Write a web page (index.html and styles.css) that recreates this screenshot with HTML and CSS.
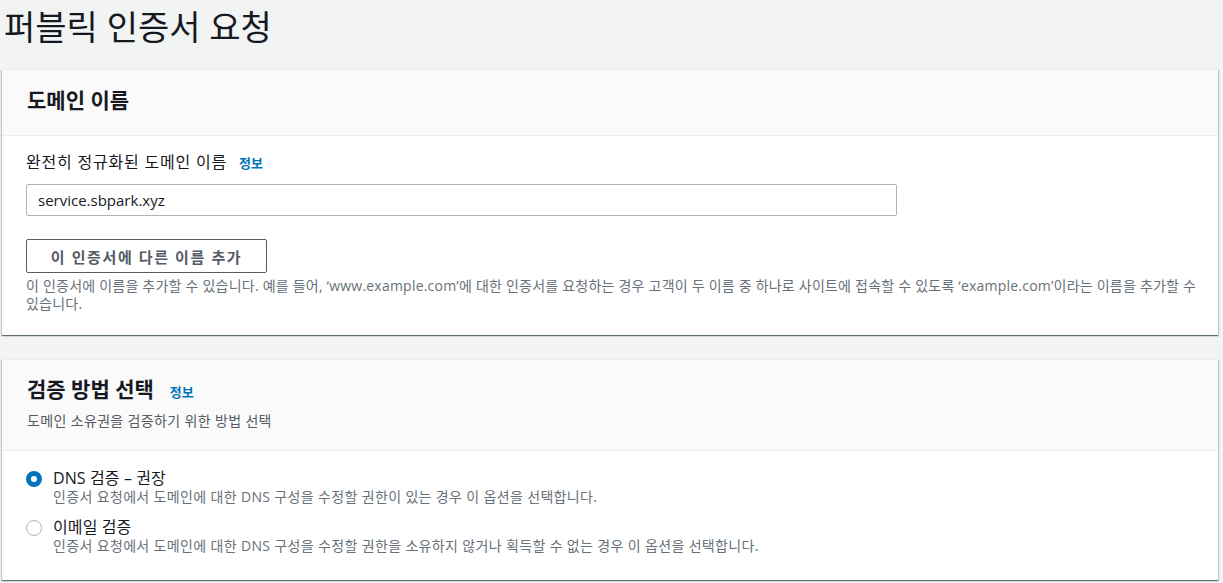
FILE: index.html
```html
<!DOCTYPE html>
<html lang="ko">
<head>
<meta charset="utf-8">
<title>퍼블릭 인증서 요청</title>
<link rel="stylesheet" href="styles.css">
</head>
<body>
<h1 class="page-title">퍼블릭 인증서 요청</h1>

<section class="card">
  <div class="card-header">
    <h2 class="card-title">도메인 이름</h2>
  </div>
  <div class="card-body">
    <div class="field-label">완전히 정규화된 도메인 이름 <a class="info">정보</a></div>
    <div class="input">service.sbpark.xyz</div>
    <button class="btn">이 인증서에 다른 이름 추가</button>
    <p class="hint">이 인증서에 이름을 추가할 수 있습니다. 예를 들어, ‘www.example.com’에 대한 인증서를 요청하는 경우 고객이 두 이름 중 하나로 사이트에 접속할 수 있도록 ‘example.com’이라는 이름을 추가할 수 있습니다.</p>
  </div>
</section>

<section class="card">
  <div class="card-header tall">
    <h2 class="card-title">검증 방법 선택 <a class="info">정보</a></h2>
    <p class="card-sub">도메인 소유권을 검증하기 위한 방법 선택</p>
  </div>
  <div class="card-body radios">
    <div class="radio-row">
      <span class="radio checked"></span>
      <div class="radio-text">
        <div class="radio-label">DNS 검증 – 권장</div>
        <div class="radio-desc">인증서 요청에서 도메인에 대한 DNS 구성을 수정할 권한이 있는 경우 이 옵션을 선택합니다.</div>
      </div>
    </div>
    <div class="radio-row">
      <span class="radio"></span>
      <div class="radio-text">
        <div class="radio-label">이메일 검증</div>
        <div class="radio-desc">인증서 요청에서 도메인에 대한 DNS 구성을 수정할 권한을 소유하지 않거나 획득할 수 없는 경우 이 옵션을 선택합니다.</div>
      </div>
    </div>
  </div>
</section>
</body>
</html>
```
FILE: styles.css
```css
* { box-sizing: border-box; }
html, body { margin: 0; padding: 0; }
body {
  background: #f2f3f3;
  font-family: "Open Sans", "Noto Sans CJK KR", sans-serif;
  color: #16191f;
  padding: 0 5px 0 2px;
}
.page-title {
  margin: 0;
  padding: 4px 0 0 2px;
  height: 69px;
  font-size: 34px;
  font-weight: 400;
  line-height: 46px;
  color: #16191f;
}
.card {
  background: #fff;
  border-top: 1px solid #eaeded;
  box-shadow: 0 1px 1px 0 rgba(0,28,36,.45), 1px 1px 1px 0 rgba(0,28,36,.15), -1px 1px 1px 0 rgba(0,28,36,.15);
  margin-bottom: 24px;
}
.card-header {
  background: #fafafa;
  border-bottom: 1px solid #eaeded;
  padding: 16px 25px 0;
  height: 66px;
}
.card-header.tall { height: 91px; padding-top: 15px; }
.card-title {
  margin: 0;
  font-size: 21px;
  font-weight: 700;
  line-height: 28px;
  display: flex;
  align-items: baseline;
  gap: 16px;
}
.card-sub {
  margin: 5px 0 0;
  font-size: 14px;
  letter-spacing: 0.35px;
  line-height: 20px;
  color: #545b64;
}
.info {
  color: #0073bb;
  font-weight: 700;
  font-size: 13px;
  letter-spacing: 0;
  text-decoration: none;
}
.card-body { padding: 15px 18px 22px 24px; }
.field-label {
  font-size: 16px;
  letter-spacing: 0.8px;
  line-height: 22px;
  margin-bottom: 10px;
}
.field-label .info { margin-left: 7px; }
.input {
  width: 871px;
  height: 32px;
  border: 1px solid #aab7b8;
  border-radius: 2px;
  padding: 0 11px;
  font-size: 15px;
  line-height: 30px;
  color: #16191f;
}
.btn {
  display: block;
  margin-top: 23px;
  width: 241px;
  height: 34px;
  background: #fff;
  border: 1px solid #545b64;
  border-radius: 2px;
  font-family: inherit;
  font-size: 15px;
  font-weight: 700;
  letter-spacing: 1.6px;
  color: #545b64;
  padding: 0;
}
.hint {
  margin: 4px 0 0;
  font-size: 14px;
  letter-spacing: 0.22px;
  line-height: 18px;
  color: #687078;
}
.radios { padding: 17px 24px 25px; }
.radio-row { display: flex; gap: 11px; }
.radio-row + .radio-row { margin-top: 11px; }
.radio {
  flex: none;
  width: 16px;
  height: 16px;
  margin-top: 3px;
  border: 1px solid #aab7b8;
  border-radius: 50%;
  background: #fff;
}
.radio.checked { border: 5px solid #0073bb; }
.radio-label { font-size: 16px; line-height: 20px; letter-spacing: 0.1px; }
.radio-desc { font-size: 14px; line-height: 18px; letter-spacing: 0.35px; color: #687078; }
```
